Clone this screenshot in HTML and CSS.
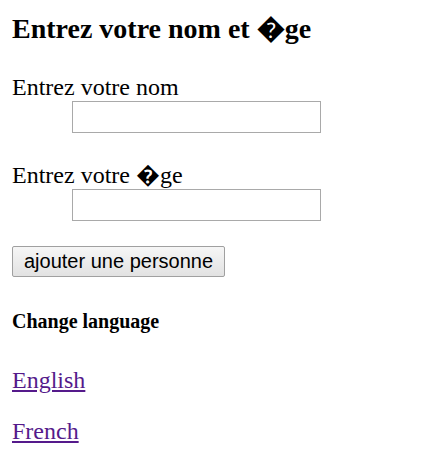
FILE: index.html
```html
<!DOCTYPE html>
<html>
<head>
<meta charset="utf-8">
<link rel="stylesheet" href="styles.css">
</head>
<body>
<h2 class="title">Entrez votre nom et �ge</h2>
<form class="form">
  <label class="field">
    <span class="label">Entrez votre nom</span>
    <input class="input" type="text">
  </label>
  <label class="field">
    <span class="label">Entrez votre �ge</span>
    <input class="input" type="text">
  </label>
  <div><button class="btn" type="button">ajouter une personne</button></div>
</form>
<h4 class="lang-title">Change language</h4>
<p class="lang"><a href="#">English</a></p>
<p class="lang"><a href="#">French</a></p>
</body>
</html>
```
FILE: styles.css
```css
body {
  margin: 0;
  padding: 0 12px;
  font-family: "Liberation Serif", "Times New Roman", serif;
  color: #000;
  background: #fff;
}
.title {
  font-size: 28px;
  font-weight: bold;
  margin: 13px 0 0;
  line-height: 32px;
}
.form {
  display: flex;
  flex-direction: column;
  margin-top: 28px;
}
.field {
  display: flex;
  flex-direction: column;
  margin-bottom: 28px;
}
.label {
  font-size: 24px;
  line-height: 28px;
}
.input {
  margin: 0 0 0 60px;
  width: 249px;
  height: 32px;
  box-sizing: border-box;
  border: 1px solid #a9a9a9;
  padding: 0;
}
.btn {
  font-family: "Liberation Sans", Arial, sans-serif;
  font-size: 20px;
  line-height: 23px;
  padding: 3px 11px;
  border: 1px solid #a0a0a0;
  border-radius: 2px;
  background: linear-gradient(#f6f6f6, #e2e2e2);
  color: #000;
  margin-top: -3px;
}
.lang-title {
  font-size: 20px;
  line-height: 23px;
  margin: 33px 0 0;
}
.lang {
  font-size: 24px;
  line-height: 28px;
  margin: 23px 0 0;
}
.lang-title + .lang {
  margin-top: 33px;
}
.lang a {
  color: #551a8b;
}
```
